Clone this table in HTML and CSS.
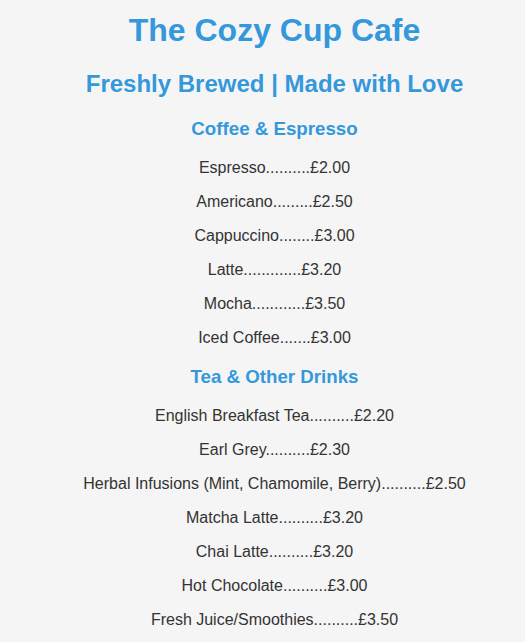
FILE: index.html
```html
<!DOCTYPE html>
<html lang="en">
<head>
<meta charset="utf-8">
<title>The Cozy Cup Cafe</title>
<link rel="stylesheet" href="styles.css">
</head>
<body>
<div class="menu">
  <h1 class="title">The Cozy Cup Cafe</h1>
  <h2 class="tagline">Freshly Brewed | Made with Love</h2>
  <section class="section">
    <h3 class="section-title">Coffee &amp; Espresso</h3>
    <p class="item">Espresso..........£2.00</p>
    <p class="item">Americano.........£2.50</p>
    <p class="item">Cappuccino........£3.00</p>
    <p class="item">Latte.............£3.20</p>
    <p class="item">Mocha............£3.50</p>
    <p class="item">Iced Coffee.......£3.00</p>
  </section>
  <section class="section">
    <h3 class="section-title">Tea &amp; Other Drinks</h3>
    <p class="item">English Breakfast Tea..........£2.20</p>
    <p class="item">Earl Grey..........£2.30</p>
    <p class="item">Herbal Infusions (Mint, Chamomile, Berry)..........£2.50</p>
    <p class="item">Matcha Latte..........£3.20</p>
    <p class="item">Chai Latte..........£3.20</p>
    <p class="item">Hot Chocolate..........£3.00</p>
    <p class="item">Fresh Juice/Smoothies..........£3.50</p>
  </section>
</div>
</body>
</html>
```
FILE: styles.css
```css
html, body {
  background: #f5f5f5;
}
body {
  margin: 0;
  font-family: "Liberation Sans", Arial, sans-serif;
  color: #333333;
}
.menu {
  padding: 12px 0 0 24px;
  text-align: center;
}
.title {
  font-size: 32px;
  margin: 0 0 21.44px;
  color: #3498db;
}
.tagline {
  font-size: 24px;
  margin: 19.92px 0;
  color: #3498db;
}
.section-title {
  font-size: 18.72px;
  margin: 18.72px 0;
  color: #3498db;
}
.item {
  font-size: 16px;
  margin: 16px 0;
}
```
